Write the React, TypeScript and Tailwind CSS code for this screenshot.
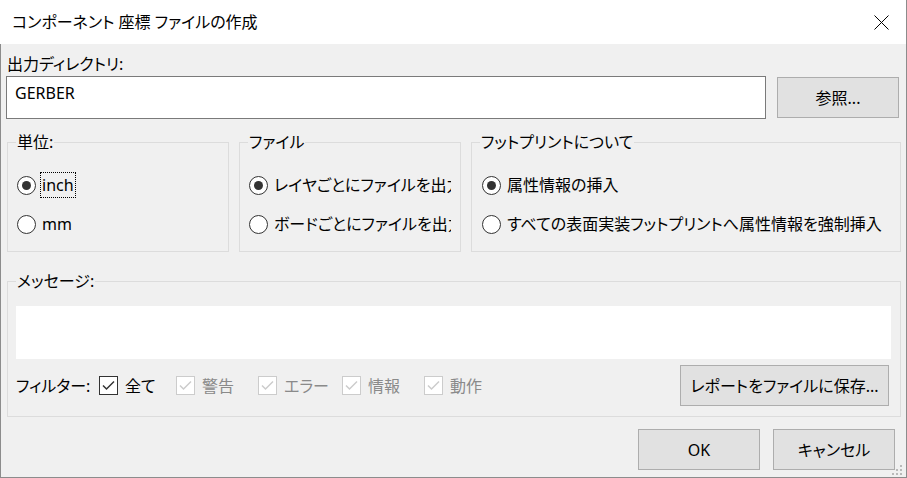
import { ReactNode } from 'react';

interface GroupProps {
  title: string;
  className?: string;
  children: ReactNode;
}

function Group({ title, className = '', children }: GroupProps) {
  return (
    <fieldset className={`border border-[#dcdcdc] min-w-0 ${className}`}>
      <legend className="ml-[8px] px-[1px] leading-[20px]">{title}</legend>
      {children}
    </fieldset>
  );
}

function Radio({ label, checked = false, focused = false }: { label: string; checked?: boolean; focused?: boolean }) {
  return (
    <div className="flex items-center h-[26px] whitespace-nowrap overflow-hidden">
      <span className="shrink-0 w-[19px] h-[19px] rounded-full border border-[#333333] bg-white flex items-center justify-center">
        {checked && <span className="w-[9px] h-[9px] rounded-full bg-[#333333]" />}
      </span>
      {focused ? (
        <span className="ml-[5px] px-[1px] leading-[24px] outline outline-1 outline-dotted outline-black">{label}</span>
      ) : (
        <span className="ml-[6px] leading-[26px]">{label}</span>
      )}
    </div>
  );
}

function Check({ label, disabled = false, className = '' }: { label: string; disabled?: boolean; className?: string }) {
  const color = disabled ? '#cccccc' : '#333333';
  return (
    <div className={`flex items-center shrink-0 ${className}`}>
      <svg width="19" height="19" viewBox="0 0 19 19" className="shrink-0">
        <rect x="0.5" y="0.5" width="18" height="18" fill="white" stroke={color} />
        <polyline points="4,9.5 7.5,13 15,5.5" fill="none" stroke={color} strokeWidth="1.5" />
      </svg>
      <span className={`ml-[7px] ${disabled ? 'text-[#8a8a8a]' : 'text-black'}`}>{label}</span>
    </div>
  );
}

function Button({ children, className = '' }: { children: ReactNode; className?: string }) {
  return (
    <button className={`shrink-0 h-[41px] bg-[#e1e1e1] border border-[#adadad] flex items-center justify-center ${className}`}>
      {children}
    </button>
  );
}

export default function App() {
  return (
    <div className="w-[907px] h-[478px] flex flex-col text-[16px] text-black font-['Noto_Sans','Noto_Sans_CJK_JP',sans-serif] [font-feature-settings:'palt'] select-none">
      {/* Title bar */}
      <div className="h-[44px] shrink-0 bg-white border-r border-[#8c8c8c] flex items-center justify-between pl-[12px] pr-[17px]">
        <span className="leading-[20px]">コンポーネント 座標 ファイルの作成</span>
        <svg width="15" height="15" viewBox="0 0 15 15">
          <path d="M0.5 0.5 L14.5 14.5 M14.5 0.5 L0.5 14.5" stroke="#000" strokeWidth="1" />
        </svg>
      </div>

      {/* Body */}
      <div className="relative flex-1 bg-[#f0f0f0] border-l border-r border-b border-[#8c8c8c] pl-[6px] flex flex-col">
        <div className="pt-[10px] leading-[20px]">出力ディレクトリ:</div>

        <div className="mt-[2px] ml-[-1px] flex items-center gap-[11px]">
          <div className="w-[760px] h-[43px] bg-white border border-[#7a7a7a] flex items-start pl-[8px] pt-[6px] leading-[20px]">
            GERBER
          </div>
          <Button className="w-[122px]">参照...</Button>
        </div>

        <div className="mt-[13px] flex gap-[10px]">
          <Group title="単位:" className="w-[222px] h-[120px]">
            <div className="flex flex-col gap-[13px] pt-[20px] pl-[9px]">
              <Radio label="inch" checked focused />
              <Radio label="mm" />
            </div>
          </Group>
          <Group title="ファイル" className="w-[222px] h-[120px]">
            <div className="flex flex-col gap-[13px] pt-[20px] pl-[9px] pr-[9px]">
              <Radio label="レイヤごとにファイルを出力" checked />
              <Radio label="ボードごとにファイルを出力" />
            </div>
          </Group>
          <Group title="フットプリントについて" className="w-[430px] h-[120px]">
            <div className="flex flex-col gap-[13px] pt-[20px] pl-[10px] pr-[4px]">
              <Radio label="属性情報の挿入" checked />
              <Radio label="すべての表面実装フットプリントへ属性情報を強制挿入" />
            </div>
          </Group>
        </div>

        <Group title="メッセージ:" className="mt-[19px] w-[894px] h-[146px]">
          <div className="mt-[15px] ml-[8px] mr-[9px] h-[53px] bg-white" />
          <div className="mt-[6px] ml-[8px] mr-[11px] flex items-center h-[41px]">
            <span className="w-[83px] shrink-0 whitespace-nowrap">フィルター:</span>
            <Check label="全て" className="w-[77px]" />
            <Check label="警告" disabled className="w-[82px]" />
            <Check label="エラー" disabled className="w-[84px]" />
            <Check label="情報" disabled className="w-[82px]" />
            <Check label="動作" disabled />
            <Button className="ml-auto w-[209px]">レポートをファイルに保存...</Button>
          </div>
        </Group>

        <div className="mt-[12px] flex justify-end gap-[13px] pr-[11px]">
          <Button className="w-[122px]">OK</Button>
          <Button className="w-[122px]">キャンセル</Button>
        </div>

        {/* resize grip */}
        <svg width="10" height="10" viewBox="0 0 10 10" className="absolute right-[4px] bottom-[2px]">
          <rect x="8" y="0" width="2" height="2" fill="#b9b9b9" />
          <rect x="4" y="4" width="2" height="2" fill="#b9b9b9" />
          <rect x="8" y="4" width="2" height="2" fill="#b9b9b9" />
          <rect x="0" y="8" width="2" height="2" fill="#b9b9b9" />
          <rect x="4" y="8" width="2" height="2" fill="#b9b9b9" />
          <rect x="8" y="8" width="2" height="2" fill="#b9b9b9" />
        </svg>
      </div>
    </div>
  );
}
